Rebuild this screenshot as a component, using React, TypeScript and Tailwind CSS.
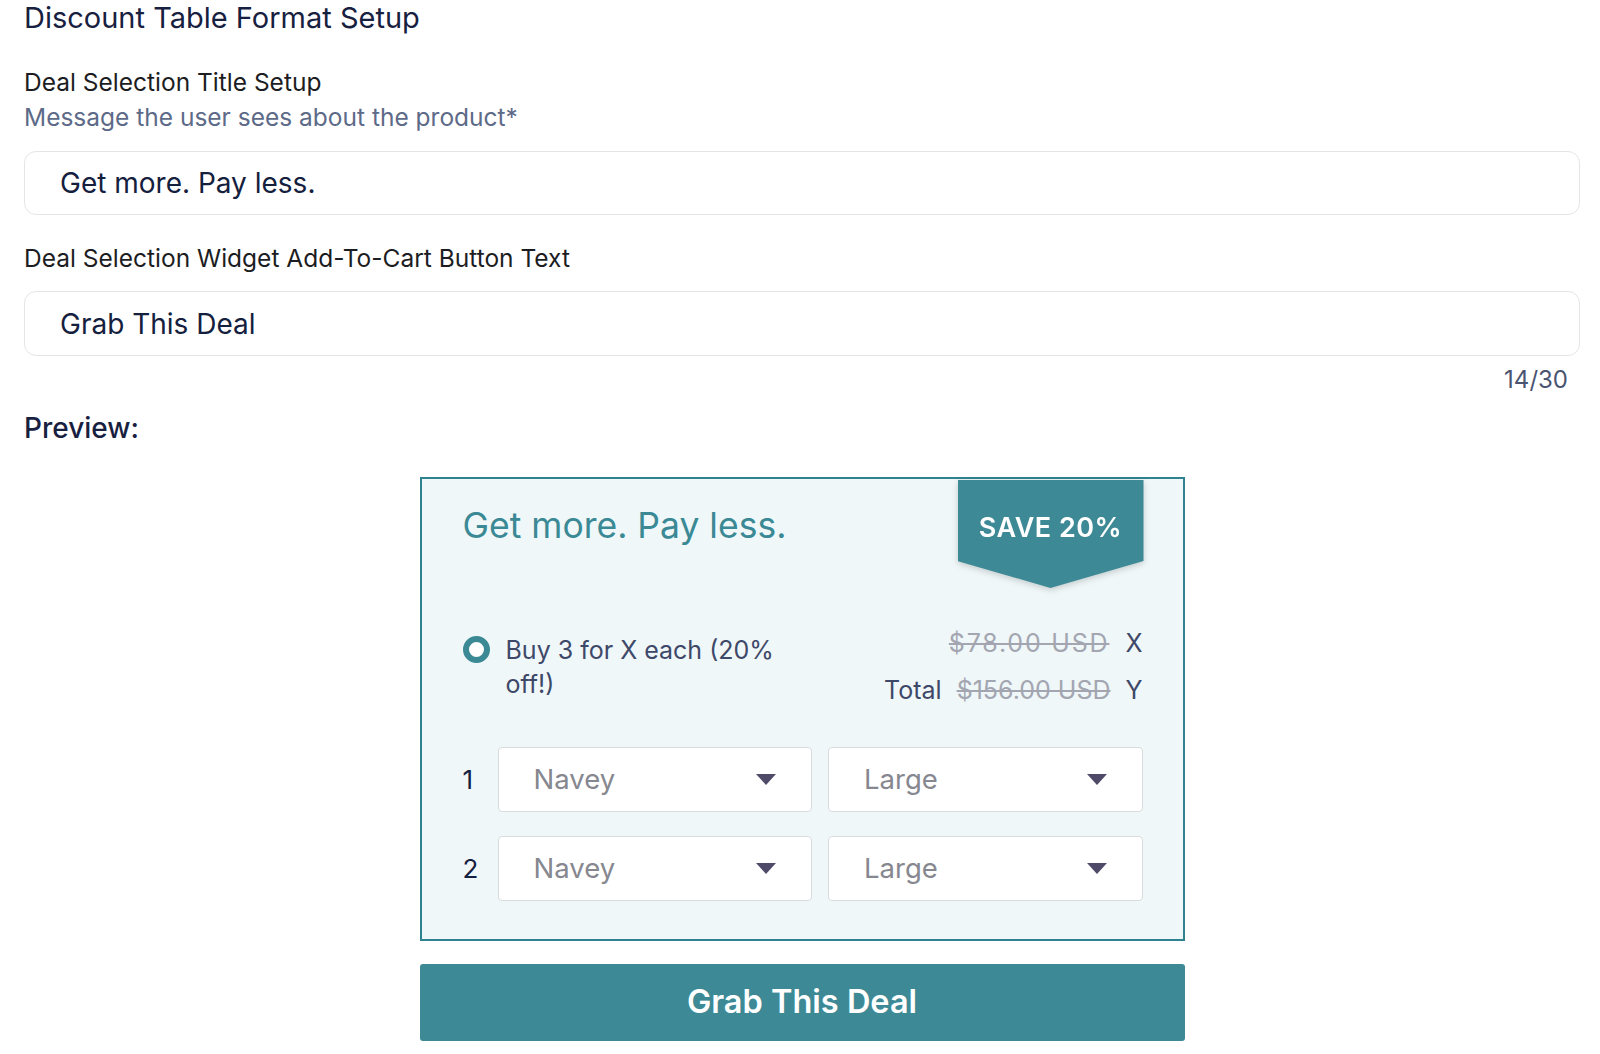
import React from "react";

const Caret = () => (
  <svg width="20" height="11" viewBox="0 0 20 11" className="shrink-0">
    <path d="M0 0 H20 L10 11 Z" fill="#4f4a68" />
  </svg>
);

const Select = ({ value }: { value: string }) => (
  <div className="flex-1 h-[65px] bg-white border border-[#d9dcdf] rounded-[4px] flex items-center justify-between pl-[35px] pr-[35px]">
    <span className="text-[27.5px] text-[#86878f]">{value}</span>
    <Caret />
  </div>
);

export default function App() {
  return (
    <div className="bg-white min-h-[1054px] w-[1600px] font-['Inter',sans-serif]">
      <div className="ml-[24px] w-[1556px]">
        <div className="text-[29px] leading-[36px] text-[#17213f]">Discount Table Format Setup</div>
        <div className="mt-[30px] text-[24.5px] leading-[32px] text-[#1c1d22]">Deal Selection Title Setup</div>
        <div className="mt-[3px] text-[24.5px] leading-[32px] text-[#5d6a88]">Message the user sees about the product*</div>
        <div className="mt-[18px] h-[64px] border border-[#e4e5e8] rounded-[12px] flex items-center pl-[35px] text-[28px] text-[#14203d]">
          Get more. Pay less.
        </div>
        <div className="mt-[27px] text-[24.5px] leading-[32px] text-[#1c1d22]">Deal Selection Widget Add-To-Cart Button Text</div>
        <div className="mt-[17px] h-[65px] border border-[#e4e5e8] rounded-[12px] flex items-center pl-[35px] text-[28px] text-[#14203d]">
          Grab This Deal
        </div>
        <div className="mt-[9px] pr-[12px] text-right text-[24px] leading-[30px] text-[#4a5471]">14/30</div>
        <div className="mt-[16px] text-[28px] leading-[34px] text-[#17213f] font-medium">Preview:</div>

        <div className="mt-[32px] mx-auto w-[765px]">
          <div className="relative border-2 border-[#2f8390] bg-[#eff7f9] pl-[41px] pr-[40px] pt-[25px] pb-[38px]">
            <div className="absolute top-[1px] right-[39px] drop-shadow-[0_2px_3px_rgba(0,0,0,0.18)]">
              <div className="w-[186px] h-[108px] bg-[#3d8a96] [clip-path:polygon(0_0,100%_0,100%_75%,50%_100%,0_75%)] flex justify-center pt-[31px]">
                <span className="text-white font-semibold text-[27px] leading-[34px] tracking-[0.5px]">SAVE 20%</span>
              </div>
            </div>
            <div className="text-[35.5px] leading-[44px] text-[#3a8995]">Get more. Pay less.</div>

            <div className="mt-[78px] flex justify-between">
              <div className="flex items-start gap-[16px] pt-[7px]">
                <div className="mt-[3px] w-[27px] h-[27px] rounded-full border-[6.5px] border-[#3a8995] bg-white shrink-0" />
                <div className="w-[300px] text-[25px] leading-[34px] text-[#3e4868]">Buy 3 for X each (20% off!)</div>
              </div>
              <div className="flex flex-col items-end text-[25px] leading-[34px]">
                <div className="flex gap-[16px]">
                  <span className="line-through text-[#a3a6b1] tracking-[1.8px]">$78.00 USD</span>
                  <span className="text-[#3e4868]">X</span>
                </div>
                <div className="mt-[13px] flex gap-[15px]">
                  <span className="text-[#3e4868]">Total</span>
                  <span className="line-through text-[#a3a6b1]">$156.00 USD</span>
                  <span className="text-[#3e4868]">Y</span>
                </div>
              </div>
            </div>

            <div className="mt-[40px] flex flex-col gap-[24px]">
              {["1", "2"].map((n) => (
                <div key={n} className="flex items-center">
                  <div className="w-[35px] text-[26px] text-[#16213f]">{n}</div>
                  <div className="flex-1 flex gap-[16px]">
                    <Select value="Navey" />
                    <Select value="Large" />
                  </div>
                </div>
              ))}
            </div>
          </div>
          <div className="mt-[23px] h-[77px] bg-[#3d8a96] rounded-[3px] flex items-center justify-center text-white font-semibold text-[32.5px]">
            Grab This Deal
          </div>
        </div>
      </div>
    </div>
  );
}
